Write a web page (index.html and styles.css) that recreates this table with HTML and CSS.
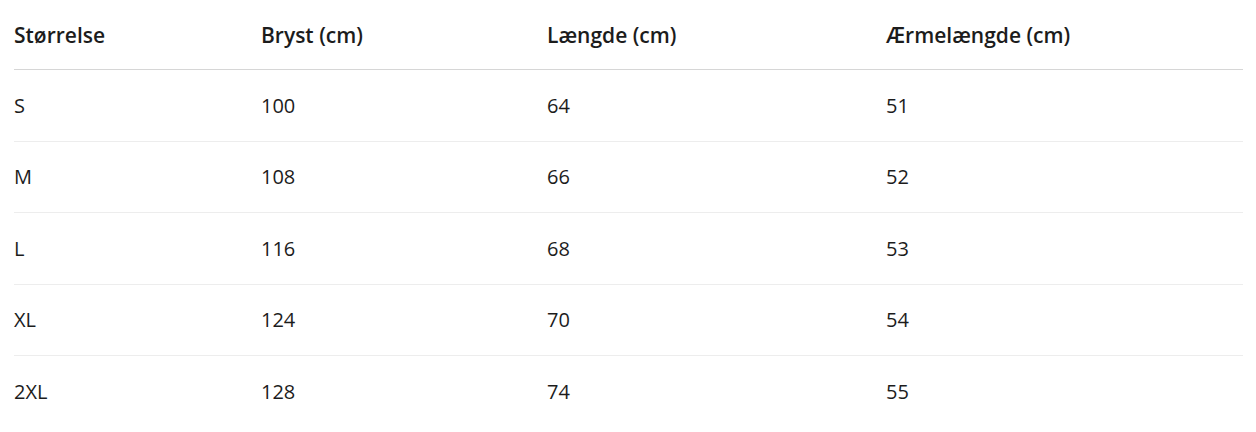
FILE: index.html
```html
<!DOCTYPE html>
<html lang="da">
<head>
<meta charset="utf-8">
<link rel="stylesheet" href="styles.css">
</head>
<body>
<table class="size-table">
  <colgroup>
    <col class="c1"><col class="c2"><col class="c3"><col class="c4">
  </colgroup>
  <thead>
    <tr><th>Størrelse</th><th>Bryst (cm)</th><th>Længde (cm)</th><th>Ærmelængde (cm)</th></tr>
  </thead>
  <tbody>
    <tr><td>S</td><td>100</td><td>64</td><td>51</td></tr>
    <tr><td>M</td><td>108</td><td>66</td><td>52</td></tr>
    <tr><td>L</td><td>116</td><td>68</td><td>53</td></tr>
    <tr><td>XL</td><td>124</td><td>70</td><td>54</td></tr>
    <tr><td>2XL</td><td>128</td><td>74</td><td>55</td></tr>
  </tbody>
</table>
</body>
</html>
```
FILE: styles.css
```css
html, body {
  margin: 0;
  background: #ffffff;
}
body {
  padding: 0 13px 0 14px;
  font-family: "Open Sans", "Noto Sans", sans-serif;
  color: #1c1c1c;
}
.size-table {
  width: 100%;
  border-collapse: collapse;
  table-layout: fixed;
}
.c1 { width: 247px; }
.c2 { width: 286px; }
.c3 { width: 339px; }
.c4 { width: auto; }
.size-table th,
.size-table td {
  padding: 0;
  text-align: left;
  vertical-align: middle;
}
.size-table th {
  height: 69px;
  font-size: 21px;
  font-weight: 600;
  border-bottom: 1px solid #d6d6d6;
}
.size-table td {
  height: 70.5px;
  font-size: 20px;
  font-weight: 400;
  border-bottom: 1px solid #ededed;
}
.size-table tbody tr:last-child td {
  border-bottom: none;
}
```
